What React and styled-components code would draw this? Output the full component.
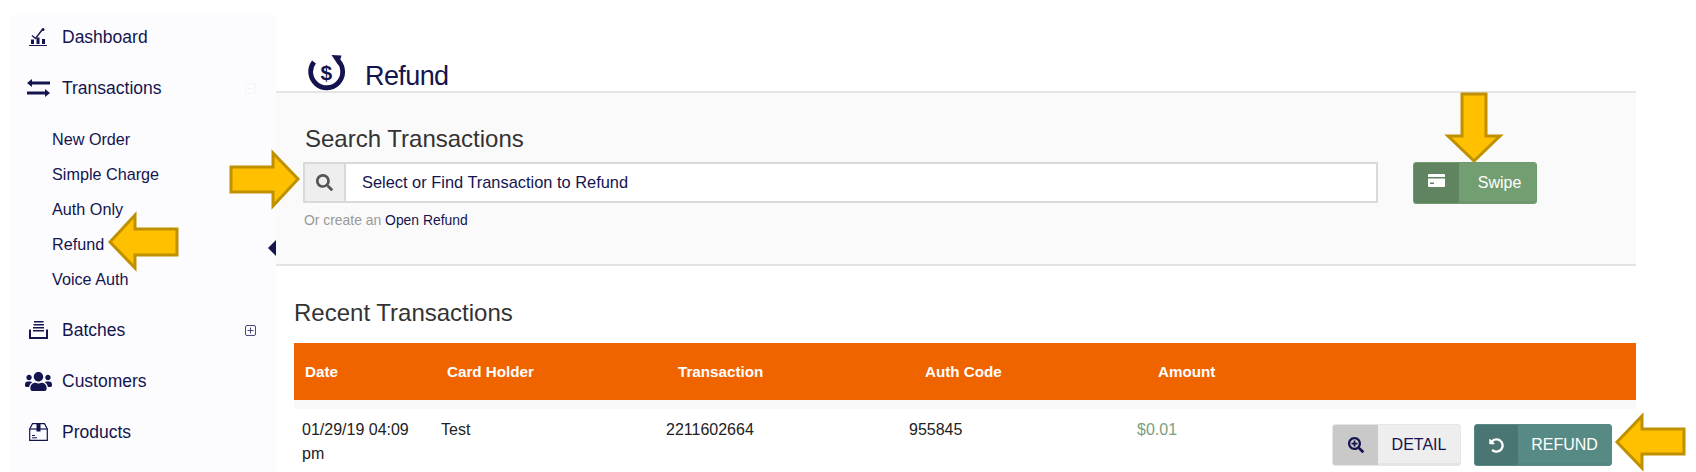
import React from "react";
import styled, { createGlobalStyle } from "styled-components";
import { FaSearch, FaSearchPlus, FaUndoAlt, FaUsers } from "react-icons/fa";

const NAVY = "#14144f";

const GlobalStyle = createGlobalStyle`
  html, body { margin: 0; padding: 0; background: #fff; }
  body { font-family: "Liberation Sans", Arial, sans-serif; color: ${NAVY}; }
  * { box-sizing: border-box; }
`;

const Page = styled.div`
  position: relative;
  display: flex;
  width: 1696px;
  height: 472px;
  overflow: hidden;
  background: #fff;
`;

const Sidebar = styled.aside`
  position: relative;
  width: 265px;
  margin: 15px 0 0 11px;
  display: flex;
  flex-direction: column;
  gap: 7px;
  background: #fcfcfe;
`;

const NavItem = styled.div`
  height: 44px;
  display: flex;
  align-items: center;
  padding-right: 20px;
  font-size: 17.5px;
`;

const NavIcon = styled.span`
  width: 51px;
  padding-left: 18px;
  display: flex;
  align-items: center;
  justify-content: flex-start;
  color: ${NAVY};
`;

const NavLabel = styled.span`
  flex: 1;
  padding-top: 1px;
`;

const SubList = styled.div`
  display: flex;
  flex-direction: column;
  padding: 4.5px 0;
`;

const SubItem = styled.div`
  height: 35px;
  line-height: 35px;
  padding-left: 41px;
  font-size: 16.2px;
`;

const Caret = styled.span`
  position: absolute;
  right: 0;
  top: 225px;
  width: 0;
  height: 0;
  border-top: 8px solid transparent;
  border-bottom: 8px solid transparent;
  border-right: 8px solid ${NAVY};
`;

const Main = styled.main`
  width: 1360px;
`;

const TitleBar = styled.header`
  height: 91px;
  padding: 0 0 0 32px;
  display: flex;
  align-items: flex-end;
  gap: 19px;
`;

const PageTitle = styled.h1`
  margin: 0;
  font-size: 27px;
  line-height: 30px;
  font-weight: 400;
  letter-spacing: -0.6px;
`;

const SearchSection = styled.section`
  height: 175px;
  padding: 32px 0 0 27px;
  background: #fafafa;
  border-top: 2px solid #e5e5e5;
  border-bottom: 2px solid #e3e3e3;
`;

const SectionHeading = styled.h2`
  margin: 0 0 0 ${(p) => p.$indent || 0}px;
  font-size: 24px;
  line-height: 28px;
  font-weight: 400;
  color: #333;
`;

const SearchRow = styled.div`
  display: flex;
  align-items: flex-start;
  gap: 35px;
  margin-top: 9px;
`;

const InputGroup = styled.div`
  width: 1075px;
  height: 41px;
  display: flex;
  background: #fff;
  border: 2px solid #d9d9d9;
`;

const InputAddon = styled.span`
  width: 41px;
  display: flex;
  align-items: center;
  justify-content: center;
  background: #eee;
  border-right: 2px solid #d9d9d9;
  color: #555;
`;

const InputText = styled.span`
  padding-left: 16px;
  font-size: 16.4px;
  line-height: 37px;
`;

const IconButton = styled.button`
  display: flex;
  height: 42px;
  width: ${(p) => p.$width}px;
  padding: 0;
  border: 1px solid ${(p) => p.$side};
  border-radius: 3px;
  overflow: hidden;
  background: ${(p) => p.$bg};
  color: ${(p) => p.$color};
  font-family: inherit;
  font-size: 16px;
  box-shadow: inset 0 -2px 0 rgba(0, 0, 0, 0.04);
`;

const ButtonIcon = styled.span`
  width: ${(p) => p.$width}px;
  height: 100%;
  display: flex;
  align-items: center;
  justify-content: center;
  background: ${(p) => p.$bg};
  color: ${(p) => p.$color};
`;

const ButtonLabel = styled.span`
  flex: 1;
  text-align: center;
  line-height: 40px;
  padding-left: ${(p) => p.$shift || 0}px;
`;

const Hint = styled.p`
  margin: 8px 0 0 1px;
  font-size: 13.9px;
  line-height: 16px;
  color: #999;
`;

const HintLink = styled.span`
  color: ${NAVY};
`;

const Recent = styled.section`
  padding: 33px 0 0 18px;
`;

const TableHead = styled.div`
  display: grid;
  grid-template-columns: 142px 231px 247px 233px 1fr;
  align-items: center;
  height: 57px;
  margin-top: 16px;
  padding-left: 11px;
  background: #f06400;
  color: #fff;
  font-size: 15.2px;
  font-weight: 700;
`;

const Spacer = styled.div`
  height: 9px;
  background: #f9f9f9;
`;

const TableRow = styled.div`
  display: grid;
  grid-template-columns: 139px 225px 243px 228px 195px 1fr;
  align-items: start;
  padding: 9px 24px 0 8px;
  color: #222;
  font-size: 16px;
  line-height: 24px;
`;

const Cell = styled.div`
  color: ${(p) => p.$color || "inherit"};
`;

const DateCell = styled(Cell)`
  width: 120px;
`;

const Actions = styled.div`
  display: flex;
  justify-content: flex-end;
  gap: 13px;
  margin-top: 6px;
`;

const ArrowLayer = styled.svg`
  position: absolute;
  inset: 0;
  pointer-events: none;
`;

const Arrow = styled.polygon`
  fill: #ffc000;
  stroke: #bf9000;
  stroke-width: 3;
`;

const DashboardIcon = () => (
  <svg width="18" height="18" viewBox="0 0 18 18" fill="currentColor">
    <path d="M0 17h18v1H0z" />
    <path d="M2 11.5h3V16H2zM7.5 9.5h3V16h-3zM13 11h3v5h-3z" />
    <path d="M3 7.5l3.5 3L13 2" fill="none" stroke="currentColor" strokeWidth="1.4" />
    <circle cx="14" cy="1.5" r="1.5" />
  </svg>
);

const TransferIcon = () => (
  <svg width="23" height="18" viewBox="0 0 23 18" fill="currentColor" style={{ marginLeft: -2 }}>
    <path d="M0 4 5 0v2.6h18v2.8H5V8z" />
    <path d="M23 14l-5 4v-2.6H0v-2.8h18V10z" />
  </svg>
);

const BatchIcon = () => (
  <svg width="19" height="18" viewBox="0 0 19 18" fill="currentColor">
    <path d="M5 0h9.5v1.6H5zM4.5 3H15v1.600H4.500zM4 6h11v1.600H4zM4 9h11v1.600H4z" />
    <path d="M1 8.500V17h17V8.500" fill="none" stroke="currentColor" strokeWidth="2" />
  </svg>
);

const BoxIcon = () => (
  <svg width="19" height="18" viewBox="0 0 19 18" fill="none" stroke="currentColor" strokeWidth="1.2">
    <path d="M.7 6 3.500.7h12L18.300 6v11.300H.7z" />
    <path d="M.7 6h17.600" />
    <path d="M7.500 0h4v8.500h-4z" fill="currentColor" stroke="none" />
    <path d="M3 12.500h3M3 14.800h5" strokeWidth="1" />
  </svg>
);

const RefundIcon = () => (
  <svg width="38" height="36" viewBox="0 0 38 36" fill="none">
    <path d="M6 7A16 16 0 1 0 30.500 6" stroke={NAVY} strokeWidth="4.800" />
    <path d="M23.500 0l10 .5-3 10z" fill={NAVY} />
    <text x="12.500" y="25" fontFamily="Liberation Sans" fontWeight="700" fontSize="21" fill={NAVY}>$</text>
  </svg>
);

const SwipeCardIcon = () => (
  <svg width="17" height="13" viewBox="0 0 17 13" style={{ marginTop: -6 }}>
    <rect width="17" height="13" rx="1" fill="#fff" />
    <rect y="3" width="17" height="1.500" fill="#60845f" />
    <rect x="2" y="8.500" width="4" height="1.500" fill="#60845f" />
  </svg>
);

const PlusBox = () => (
  <svg width="11" height="11" viewBox="0 0 11 11" fill="none" stroke="#4a4a78" strokeWidth="1">
    <rect x="0.500" y="0.500" width="10" height="10" rx="1.500" />
    <path d="M5.500 2.500v6M2.500 5.500h6" />
  </svg>
);

const MinusBox = () => (
  <svg width="11" height="11" viewBox="0 0 11 11" fill="none" stroke="#f4f4f6" strokeWidth="1">
    <rect x="0.500" y="0.500" width="10" height="10" rx="1.500" />
    <path d="M2.500 5.500h6" />
  </svg>
);

const subItems = ["New Order", "Simple Charge", "Auth Only", "Refund", "Voice Auth"];

const arrows = [
  "110,242 135,215 135,229 177,229 177,255 135,255 135,268",
  "231,167 273,167 273,153 298,179 273,206 273,192 231,192",
  "1462,94 1486,94 1486,136 1500,136 1474,161 1448,136 1462,136",
  "1617,442 1642,416 1642,429 1684,429 1684,454 1642,454 1642,468",
];

export default function App() {
  return (
    <Page>
      <GlobalStyle />
      <Sidebar>
        <NavItem>
          <NavIcon><DashboardIcon /></NavIcon>
          <NavLabel>Dashboard</NavLabel>
        </NavItem>
        <NavItem>
          <NavIcon><TransferIcon /></NavIcon>
          <NavLabel>Transactions</NavLabel>
          <MinusBox />
        </NavItem>
        <SubList>
          {subItems.map((item) => (
            <SubItem key={item}>{item}</SubItem>
          ))}
        </SubList>
        <NavItem>
          <NavIcon><BatchIcon /></NavIcon>
          <NavLabel>Batches</NavLabel>
          <PlusBox />
        </NavItem>
        <NavItem>
          <NavIcon><FaUsers size={27} style={{ marginLeft: -4, flexShrink: 0 }} /></NavIcon>
          <NavLabel>Customers</NavLabel>
        </NavItem>
        <NavItem>
          <NavIcon><BoxIcon /></NavIcon>
          <NavLabel>Products</NavLabel>
        </NavItem>
        <Caret />
      </Sidebar>

      <Main>
        <TitleBar>
          <RefundIcon />
          <PageTitle>Refund</PageTitle>
        </TitleBar>

        <SearchSection>
          <SectionHeading $indent={2}>Search Transactions</SectionHeading>
          <SearchRow>
            <InputGroup>
              <InputAddon><FaSearch size={17} /></InputAddon>
              <InputText>Select or Find Transaction to Refund</InputText>
            </InputGroup>
            <IconButton $width={124} $bg="#739e72" $side="#6e9a6e" $color="#fff">
              <ButtonIcon $width={45} $bg="#60845f" $color="#fff"><SwipeCardIcon /></ButtonIcon>
              <ButtonLabel $shift={4}>Swipe</ButtonLabel>
            </IconButton>
          </SearchRow>
          <Hint>Or create an <HintLink>Open Refund</HintLink></Hint>
        </SearchSection>

        <Recent>
          <SectionHeading>Recent Transactions</SectionHeading>
          <TableHead>
            <span>Date</span>
            <span>Card Holder</span>
            <span>Transaction</span>
            <span>Auth Code</span>
            <span>Amount</span>
          </TableHead>
          <Spacer />
          <TableRow>
            <DateCell>01/29/19 04:09 pm</DateCell>
            <Cell>Test</Cell>
            <Cell>2211602664</Cell>
            <Cell>955845</Cell>
            <Cell $color="#7a9e7e">$0.01</Cell>
            <Actions>
              <IconButton $width={129} $bg="#eee" $side="#e6e6e6" $color={NAVY}>
                <ButtonIcon $width={45} $bg="#c9c9c9" $color={NAVY}><FaSearchPlus size={16} /></ButtonIcon>
                <ButtonLabel>DETAIL</ButtonLabel>
              </IconButton>
              <IconButton $width={138} $bg="#578a85" $side="#578a85" $color="#fff">
                <ButtonIcon $width={43} $bg="#4b7572" $color="#fff"><FaUndoAlt size={15} /></ButtonIcon>
                <ButtonLabel>REFUND</ButtonLabel>
              </IconButton>
            </Actions>
          </TableRow>
        </Recent>
      </Main>

      <ArrowLayer width="1696" height="472" viewBox="0 0 1696 472">
        {arrows.map((points) => (
          <Arrow key={points} points={points} />
        ))}
      </ArrowLayer>
    </Page>
  );
}
